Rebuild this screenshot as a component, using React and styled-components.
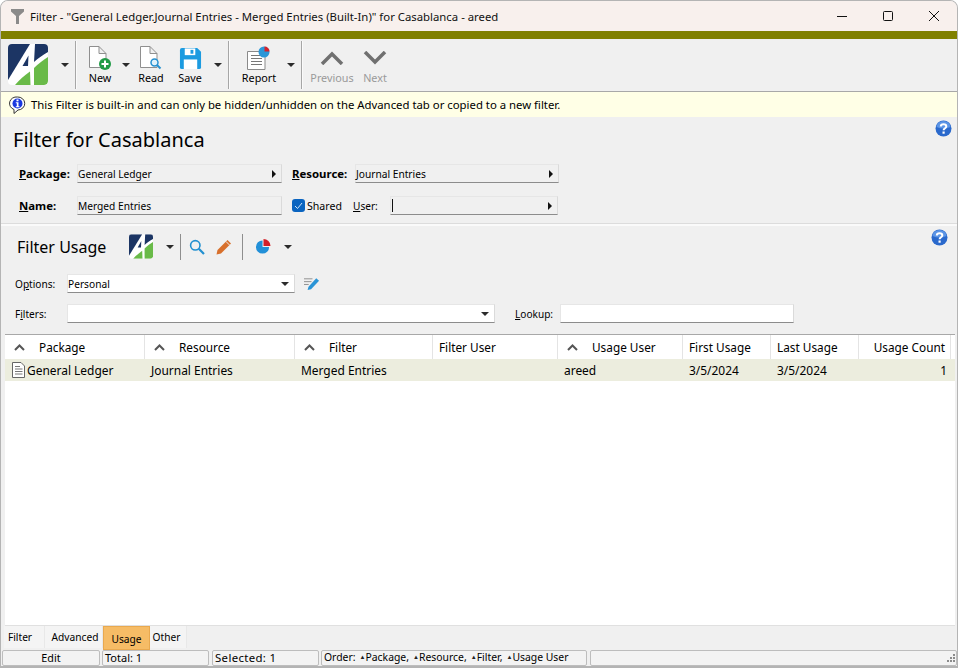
import React from 'react';
import styled, { createGlobalStyle } from 'styled-components';

const GlobalStyle = createGlobalStyle`
  html, body {
    margin: 0;
    padding: 0;
    background: #ffffff;
  }
  * {
    box-sizing: border-box;
  }
`;

const columns = '140px 150px 138px 125px 125px 88px 88px 92px';
const font = '"Noto Sans", "Open Sans", sans-serif';

const Window = styled.div`
  width: 958px;
  height: 668px;
  display: flex;
  flex-direction: column;
  background: #f0f0f0;
  border: 1px solid #b4b4b4;
  border-bottom-width: 2px;
  border-radius: 8px 8px 0 0;
  overflow: hidden;
  font-family: ${font};
  font-size: 11px;
  color: #000;
`;

const TitleBar = styled.div`
  height: 30px;
  flex: none;
  display: flex;
  align-items: center;
  background: #f8f0ed;
  padding-left: 10px;
`;

const TitleText = styled.span`
  font-size: 11.35px;
  margin-left: 6px;
  flex: 1;
  color: #111;
`;

const WindowButton = styled.div`
  width: 46px;
  height: 30px;
  display: flex;
  align-items: center;
  justify-content: center;
`;

const OliveBar = styled.div`
  height: 8px;
  flex: none;
  background: #808000;
`;

const Toolbar = styled.div`
  height: 53px;
  flex: none;
  display: flex;
  align-items: stretch;
  padding-left: 7px;
  border-bottom: 1px solid #a8a8a8;
`;

const ToolButton = styled.div`
  width: ${(p) => p.$w}px;
  margin-left: ${(p) => p.$ml || 0}px;
  display: flex;
  flex-direction: column;
  align-items: center;
  padding-top: 7px;
  color: ${(p) => (p.$off ? '#9a9a9a' : '#000')};
`;

const ToolIcon = styled.div`
  height: 24px;
  display: flex;
  align-items: center;
  justify-content: center;
`;

const ToolLabel = styled.div`
  line-height: 16px;
  font-size: 10.8px;
  white-space: nowrap;
`;

const LogoBox = styled.div`
  width: 40px;
  height: 41px;
  margin-top: 5px;
`;

const DropBox = styled.div`
  width: 8px;
  margin-left: ${(p) => p.$ml}px;
  display: flex;
  align-items: center;
  justify-content: center;
`;

const Caret = styled.div`
  width: 0;
  height: 0;
  border-left: 4px solid transparent;
  border-right: 4px solid transparent;
  border-top: 4px solid #2b2b2b;
`;

const ToolSep = styled.div`
  width: 2px;
  margin: 2px 0 2px ${(p) => p.$ml}px;
  background: #a6a6a6;
  border-right: 1px solid #fafafa;
`;

const InfoBar = styled.div`
  height: 25px;
  flex: none;
  display: flex;
  align-items: center;
  gap: 5px;
  padding-left: 8px;
  background: #ffffe6;
  font-size: 11.35px;
`;

const Section = styled.section`
  height: 107px;
  flex: none;
  position: relative;
  border-bottom: 1px solid #dcdcdc;
  padding: 8px 0 0 12px;
`;

const HelpSpot = styled.div`
  position: absolute;
  top: ${(p) => p.$top}px;
  right: ${(p) => p.$right}px;
  width: 17px;
  height: 17px;
`;

const Heading = styled.h1`
  margin: 0;
  font-size: 20px;
  font-weight: 400;
  line-height: 29px;
`;

const FieldRow = styled.div`
  display: flex;
  align-items: center;
  height: 19px;
  margin-top: ${(p) => p.$mt}px;
  padding-left: ${(p) => p.$pl || 0}px;
`;

const BoldLabel = styled.label`
  font-weight: 700;
  font-size: 11.4px;
  width: ${(p) => p.$w}px;
  margin-left: ${(p) => p.$ml || 0}px;
  flex: none;
`;

const PlainLabel = styled.label`
  width: ${(p) => p.$w}px;
  margin-left: ${(p) => p.$ml || 0}px;
  flex: none;
  font-size: 10.1px;
`;

const Field = styled.div`
  width: ${(p) => p.$w}px;
  height: 19px;
  flex: none;
  display: flex;
  align-items: center;
  justify-content: space-between;
  padding: 0 5px 0 0;
  background: ${(p) => (p.$white ? '#fff' : '#f0f0f0')};
  border: 1px solid #e6e6e6;
  border-bottom: 1px solid #8c8c8c;
  border-right-color: #dadada;
  font-size: 10.2px;
  white-space: nowrap;
`;

const SideCaret = styled.div`
  width: 0;
  height: 0;
  border-top: 4px solid transparent;
  border-bottom: 4px solid transparent;
  border-left: 4px solid #111;
`;

const Cursor = styled.div`
  width: 1px;
  height: 13px;
  margin-left: 1px;
  background: #111;
`;

const Check = styled.div`
  width: 13px;
  height: 13px;
  margin-left: 10px;
  flex: none;
  border-radius: 3px;
  background: #0a64c0;
  display: flex;
  align-items: center;
  justify-content: center;
`;

const CheckText = styled.span`
  margin-left: 2px;
  width: 46px;
  flex: none;
  font-size: 10.6px;
`;

const UsagePanel = styled.section`
  flex: 1;
  min-height: 0;
  display: flex;
  flex-direction: column;
  position: relative;
  border-top: 2px solid #fafafa;
`;

const UsageBar = styled.div`
  height: 37px;
  flex: none;
  display: flex;
  align-items: stretch;
  padding: 4px 0 0 16px;
`;

const UsageTitle = styled.div`
  width: 112px;
  font-size: 16px;
  line-height: 34px;
  flex: none;
`;

const SmallLogo = styled.div`
  width: 24px;
  height: 25px;
  margin-top: 4px;
`;

const BarSep = styled.div`
  width: 1px;
  margin: 4px 0 3px ${(p) => p.$ml}px;
  background: #8e8e8e;
`;

const BarIcon = styled.div`
  width: 16px;
  margin-left: ${(p) => p.$ml}px;
  display: flex;
  align-items: center;
  justify-content: center;
`;

const FilterRow = styled.div`
  display: flex;
  align-items: center;
  height: 19px;
  padding-left: 14px;
  margin-top: ${(p) => p.$mt}px;
`;

const Grid = styled.div`
  flex: 1;
  min-height: 0;
  margin: 11px 2px 0 4px;
  background: #fff;
  border-top: 1px solid #a8a8a8;
  border-bottom: 1px solid #e0e0e0;
`;

const HeadRow = styled.div`
  display: grid;
  grid-template-columns: ${columns};
  height: 24px;
`;

const HeadCell = styled.div`
  display: flex;
  align-items: center;
  justify-content: ${(p) => (p.$right ? 'flex-end' : 'flex-start')};
  padding: ${(p) => (p.$right ? '0 5px 0 0' : '0 0 0 6px')};
  border-right: 1px solid #e4e4e4;
  font-size: 11.8px;
  white-space: nowrap;
`;

const SortMark = styled.svg`
  width: 11px;
  height: 7px;
  margin: 0 14px 0 3px;
  flex: none;
`;

const DataRow = styled.div`
  display: grid;
  grid-template-columns: ${columns};
  height: 22px;
  background: #ecedde;
`;

const DataCell = styled.div`
  display: flex;
  align-items: center;
  gap: 2px;
  justify-content: ${(p) => (p.$right ? 'flex-end' : 'flex-start')};
  padding: ${(p) => (p.$right ? '0 4px 0 0' : `0 0 0 ${p.$pl ?? 6}px`)};
  font-size: 11.95px;
  white-space: nowrap;
`;

const Tabs = styled.div`
  height: 24px;
  flex: none;
  display: flex;
  padding-left: 3px;
`;

const Tab = styled.div`
  width: ${(p) => p.$w}px;
  height: ${(p) => (p.$active ? 24 : 22)}px;
  display: flex;
  align-items: ${(p) => (p.$active ? 'flex-end' : 'center')};
  justify-content: center;
  padding-bottom: ${(p) => (p.$active ? 3 : 0)}px;
  padding-right: ${(p) => p.$pr || 0}px;
  padding-left: ${(p) => p.$pl || 0}px;
  background: ${(p) => (p.$active ? '#f6bc66' : '#f4f4f4')};
  border: ${(p) => (p.$active ? '1px solid #e9a94f' : 'none')};
  border-right: ${(p) => (p.$active ? '1px solid #e9a94f' : '1px solid #e8e8e8')};
  font-size: 10.2px;
`;

const StatusBar = styled.div`
  height: 16px;
  flex: none;
  display: flex;
  gap: 2px;
  padding-left: 1px;
  position: relative;
`;

const StatusCell = styled.div`
  width: ${(p) => p.$w}px;
  flex: ${(p) => (p.$grow ? 1 : 'none')};
  margin-right: ${(p) => p.$mr || 0}px;
  display: flex;
  align-items: center;
  justify-content: ${(p) => (p.$center ? 'center' : 'flex-start')};
  padding-left: ${(p) => (p.$center ? 0 : 2)}px;
  padding-bottom: 2px;
  background: #f3f3f3;
  border: 1px solid #bdbdbd;
  border-radius: 2px;
  font-size: ${(p) => p.$size || 10.8}px;
  letter-spacing: ${(p) => p.$track || 0}px;
  white-space: nowrap;
`;

const OrderMark = styled.span`
  font-size: 6px;
  margin-left: 4px;
  color: #222;
`;

const Grip = styled.svg`
  position: absolute;
  right: 1px;
  bottom: 1px;
  width: 12px;
  height: 12px;
`;

const LogoMark = () => (
  <svg width="100%" height="100%" viewBox="0 0 40 41">
    <defs>
      <clipPath id="logoClip">
        <rect width="40" height="41" rx="4" />
      </clipPath>
    </defs>
    <g clipPath="url(#logoClip)">
      <rect width="40" height="41" fill="#fff" />
      <path d="M0 0H22L0 36Z" fill="#1c3564" />
      <path d="M27 0H40V8C35 11 30 14 26 18Z" fill="#1c3564" />
      <path d="M14.500 22L20.500 11.500L20 22Z" fill="#1c3564" />
      <path d="M40 13V37a4 4 0 0 1-4 4H26V24C30 20 35 16 40 13Z" fill="#69ba48" />
      <path d="M7 41C11 36 16 32 22 27.500L22.500 41Z" fill="#69ba48" />
    </g>
  </svg>
);

const DocShape = () => (
  <path
    d="M1.500 0.500H11L18 7.500V21.500H1.500Z M11 0.500V7.500H18"
    fill="#fff"
    stroke="#8f8f8f"
  />
);

const NewIcon = () => (
  <svg width="24" height="24" viewBox="0 0 24 24">
    <DocShape />
    <circle cx="17" cy="18" r="6" fill="#1f9a46" />
    <path d="M17 14.500V21.500M13.500 18H20.500" stroke="#fff" strokeWidth="2" />
  </svg>
);

const ReadIcon = () => (
  <svg width="24" height="24" viewBox="0 0 24 24">
    <DocShape />
    <circle cx="15.500" cy="16.500" r="3.500" fill="#dff1fb" stroke="#2590d0" strokeWidth="1.500" />
    <path d="M18 19L21.500 22.500" stroke="#2590d0" strokeWidth="2" />
  </svg>
);

const SaveIcon = () => (
  <svg width="23" height="23" viewBox="0 0 24 24">
    <path d="M3 1H19L23 5V21a2 2 0 0 1-2 2H3a2 2 0 0 1-2-2V3a2 2 0 0 1 2-2Z" fill="#1c9be0" />
    <rect x="6" y="1.500" width="11" height="7" fill="#fff" />
    <rect x="12" y="3" width="3" height="4" fill="#1c9be0" />
    <rect x="5" y="13" width="14" height="10" fill="#fff" />
  </svg>
);

const ReportIcon = () => (
  <svg width="26" height="24" viewBox="0 0 26 24">
    <path d="M1.500 5.500H15L19 9.500V23.500H1.500Z" fill="#fff" stroke="#8a8a8a" />
    <path d="M5 9.500H14M5 12.500H16M5 15.500H16M5 18.500H16" stroke="#777" />
    <circle cx="18" cy="6" r="5.500" fill="#2b97d8" />
    <path d="M18.500 5.500V0.500A5 5 0 0 1 23.500 5.500Z" fill="#d4232b" />
  </svg>
);

const ChevronIcon = ({ up }) => (
  <svg width="24" height="14" viewBox="0 0 24 14">
    <path
      d={up ? 'M2 13L12 3L22 13' : 'M2 1L12 11L22 1'}
      fill="none"
      stroke="#707070"
      strokeWidth="3.500"
    />
  </svg>
);

const InfoIcon = () => (
  <svg width="17" height="18" viewBox="0 0 17 18">
    <path d="M8.500 1A7 6.500 0 0 1 9 14L5 17.500V13.500A7 6.500 0 0 1 8.500 1Z" fill="#fff" stroke="#333" />
    <circle cx="8.500" cy="7.500" r="5" fill="#1a38e0" />
    <rect x="7.500" y="3.500" width="2" height="1.800" fill="#fff" />
    <path d="M6.800 6.300H9.500V10.200H10.500V11.200H6.800V10.200H7.800V7.300H6.800Z" fill="#fff" />
  </svg>
);

const HelpIcon = () => (
  <svg width="17" height="17" viewBox="0 0 17 17">
    <circle cx="8.500" cy="8.500" r="8" fill="#2a69cc" />
    <path d="M1.500 7A7 6 0 0 1 15.500 7Q8.500 10 1.500 7Z" fill="#5c95e6" />
    <path
      d="M5.800 6.500C5.800 3.500 11.300 3.500 11.300 6.500C11.300 8.300 8.600 8.300 8.600 10.300"
      fill="none"
      stroke="#fff"
      strokeWidth="2"
    />
    <rect x="7.500" y="11.500" width="2.200" height="2.200" fill="#fff" />
  </svg>
);

const SearchIcon = () => (
  <svg width="16" height="16" viewBox="0 0 16 16">
    <circle cx="6.300" cy="6.300" r="4.700" fill="none" stroke="#2290d0" strokeWidth="1.600" />
    <path d="M9.800 9.800L15 15" stroke="#2290d0" strokeWidth="2.200" />
  </svg>
);

const PencilIcon = () => (
  <svg width="16" height="16" viewBox="0 0 16 16">
    <path d="M11.500 1L15 4.500L5 14.500L0.500 15.500L1.500 11Z" fill="#d8702c" />
    <path d="M10 2.500L13.500 6" stroke="#f0f0f0" />
  </svg>
);

const PieIcon = () => (
  <svg width="17" height="17" viewBox="0 0 17 17">
    <path d="M8 2A7 7 0 1 0 15 9H8Z" fill="#2290d8" />
    <path d="M9 0.500A7.500 7.500 0 0 1 16.500 8H9Z" fill="#d42028" />
  </svg>
);

const NoteEditIcon = () => (
  <svg width="17" height="14" viewBox="0 0 17 14">
    <path d="M0 1.500H9M0 4.500H8M0 7.500H5" stroke="#8c8c8c" />
    <path d="M13 1L16 3.500L7.500 12.500L3.800 13.500L4.800 9.800Z" fill="#2a94d6" />
  </svg>
);

const RowDocIcon = () => (
  <svg width="13" height="16" viewBox="0 0 13 16">
    <path d="M0.500 0.500H9L12.500 4V15.500H0.500Z" fill="#fff" stroke="#666" />
    <path d="M3 4.500H8M3 7H10.500M3 9.500H10.500M3 12H10.500" stroke="#777" />
  </svg>
);

const FilterIcon = () => (
  <svg width="13" height="15" viewBox="0 0 13 15">
    <path d="M0 0H13V2.500L8 7V15H5V7L0 2.500Z" fill="#8a8a8a" />
  </svg>
);

const ArrowUp = () => (
  <SortMark viewBox="0 0 11 7">
    <path d="M1 6L5.500 1.500L10 6" fill="none" stroke="#555" strokeWidth="2" />
  </SortMark>
);

const HEADERS = [
  { text: 'Package', sort: true },
  { text: 'Resource', sort: true },
  { text: 'Filter', sort: true },
  { text: 'Filter User' },
  { text: 'Usage User', sort: true },
  { text: 'First Usage' },
  { text: 'Last Usage' },
  { text: 'Usage Count', right: true },
];

const App = () => {
  return (
    <>
      <GlobalStyle />
      <Window>
        <TitleBar>
          <FilterIcon />
          <TitleText>
            Filter - &quot;General Ledger.Journal Entries - Merged Entries (Built-In)&quot; for
            Casablanca - areed
          </TitleText>
          <WindowButton>
            <svg width="10" height="10" viewBox="0 0 10 10">
              <path d="M0 5.500H10" stroke="#111" />
            </svg>
          </WindowButton>
          <WindowButton>
            <svg width="10" height="10" viewBox="0 0 10 10">
              <rect x="0.500" y="0.500" width="9" height="9" rx="1" fill="none" stroke="#111" />
            </svg>
          </WindowButton>
          <WindowButton>
            <svg width="10" height="10" viewBox="0 0 10 10">
              <path d="M0 0L10 10M10 0L0 10" stroke="#111" />
            </svg>
          </WindowButton>
        </TitleBar>
        <OliveBar />

        <Toolbar>
          <LogoBox>
            <LogoMark />
          </LogoBox>
          <DropBox $ml={13}>
            <Caret />
          </DropBox>
          <ToolSep $ml={6} />
          <ToolButton $w={28} $ml={9}>
            <ToolIcon>
              <NewIcon />
            </ToolIcon>
            <ToolLabel>New</ToolLabel>
          </ToolButton>
          <DropBox $ml={8}>
            <Caret />
          </DropBox>
          <ToolButton $w={30} $ml={6}>
            <ToolIcon>
              <ReadIcon />
            </ToolIcon>
            <ToolLabel>Read</ToolLabel>
          </ToolButton>
          <ToolButton $w={30} $ml={9}>
            <ToolIcon>
              <SaveIcon />
            </ToolIcon>
            <ToolLabel>Save</ToolLabel>
          </ToolButton>
          <DropBox $ml={9}>
            <Caret />
          </DropBox>
          <ToolSep $ml={6} />
          <ToolButton $w={40} $ml={9}>
            <ToolIcon>
              <ReportIcon />
            </ToolIcon>
            <ToolLabel>Report</ToolLabel>
          </ToolButton>
          <DropBox $ml={8}>
            <Caret />
          </DropBox>
          <ToolSep $ml={6} />
          <ToolButton $w={46} $ml={6} $off>
            <ToolIcon>
              <ChevronIcon up />
            </ToolIcon>
            <ToolLabel>Previous</ToolLabel>
          </ToolButton>
          <ToolButton $w={30} $ml={5} $off>
            <ToolIcon>
              <ChevronIcon />
            </ToolIcon>
            <ToolLabel>Next</ToolLabel>
          </ToolButton>
        </Toolbar>

        <InfoBar>
          <InfoIcon />
          This Filter is built-in and can only be hidden/unhidden on the Advanced tab or copied to
          a new filter.
        </InfoBar>

        <Section>
          <Heading>Filter for Casablanca</Heading>
          <HelpSpot $top={3} $right={5}>
            <HelpIcon />
          </HelpSpot>
          <FieldRow $mt={10} $pl={6}>
            <BoldLabel $w={58}>
              <u>P</u>ackage:
            </BoldLabel>
            <Field $w={205}>
              General Ledger
              <SideCaret />
            </Field>
            <BoldLabel $w={63} $ml={10}>
              <u>R</u>esource:
            </BoldLabel>
            <Field $w={204}>
              Journal Entries
              <SideCaret />
            </Field>
          </FieldRow>
          <FieldRow $mt={13} $pl={6}>
            <BoldLabel $w={58}>
              <u>N</u>ame:
            </BoldLabel>
            <Field $w={205}>Merged Entries</Field>
            <Check>
              <svg width="9" height="8" viewBox="0 0 9 8">
                <path d="M1 4L3.500 6.500L8 1" fill="none" stroke="#cfe3f7" />
              </svg>
            </Check>
            <CheckText>Shared</CheckText>
            <PlainLabel $w={37}>
              <u>U</u>ser:
            </PlainLabel>
            <Field $w={168}>
              <Cursor />
              <SideCaret />
            </Field>
          </FieldRow>
        </Section>

        <UsagePanel>
          <HelpSpot $top={3} $right={9}>
            <HelpIcon />
          </HelpSpot>
          <UsageBar>
            <UsageTitle>Filter Usage</UsageTitle>
            <SmallLogo>
              <LogoMark />
            </SmallLogo>
            <DropBox $ml={13}>
              <Caret />
            </DropBox>
            <BarSep $ml={6} />
            <BarIcon $ml={8}>
              <SearchIcon />
            </BarIcon>
            <BarIcon $ml={11}>
              <PencilIcon />
            </BarIcon>
            <BarSep $ml={10} />
            <BarIcon $ml={12}>
              <PieIcon />
            </BarIcon>
            <DropBox $ml={13}>
              <Caret />
            </DropBox>
          </UsageBar>

          <FilterRow $mt={11}>
            <PlainLabel $w={52}>
              O<u>p</u>tions:
            </PlainLabel>
            <Field $w={228} $white>
              Personal
              <Caret />
            </Field>
            <BarIcon $ml={9}>
              <NoteEditIcon />
            </BarIcon>
          </FilterRow>
          <FilterRow $mt={11}>
            <PlainLabel $w={52}>
              F<u>i</u>lters:
            </PlainLabel>
            <Field $w={428} $white>
              <span />
              <Caret />
            </Field>
            <PlainLabel $w={45} $ml={20}>
              <u>L</u>ookup:
            </PlainLabel>
            <Field $w={234} $white />
          </FilterRow>

          <Grid>
            <HeadRow>
              {HEADERS.map((h) => (
                <HeadCell key={h.text} $right={h.right}>
                  {h.sort && <ArrowUp />}
                  {h.text}
                </HeadCell>
              ))}
            </HeadRow>
            <DataRow>
              <DataCell $pl={7}>
                <RowDocIcon />
                General Ledger
              </DataCell>
              <DataCell>Journal Entries</DataCell>
              <DataCell>Merged Entries</DataCell>
              <DataCell />
              <DataCell>areed</DataCell>
              <DataCell>3/5/2024</DataCell>
              <DataCell>3/5/2024</DataCell>
              <DataCell $right>1</DataCell>
            </DataRow>
          </Grid>

          <Tabs>
            <Tab $w={41} $pr={8}>
              Filter
            </Tab>
            <Tab $w={58} $pl={3}>
              Advanced
            </Tab>
            <Tab $w={47} $active>
              Usage
            </Tab>
            <Tab $w={37} $pr={3}>
              Other
            </Tab>
          </Tabs>
          <StatusBar>
            <StatusCell $w={98} $center>
              Edit
            </StatusCell>
            <StatusCell $w={107} $mr={1} $size={11}>
              Total: 1
            </StatusCell>
            <StatusCell $w={107} $size={11.4} $track={0.35}>
              Selected: 1
            </StatusCell>
            <StatusCell $w={266} $mr={1} $size={10.4}>
              Order:
              <OrderMark>▲</OrderMark>Package,
              <OrderMark>▲</OrderMark>Resource,
              <OrderMark>▲</OrderMark>Filter,
              <OrderMark>▲</OrderMark>Usage User
            </StatusCell>
            <StatusCell $grow />
            <Grip viewBox="0 0 12 12">
              <path
                d="M9 1h2v2H9zM6 4h2v2H6zM9 4h2v2H9zM3 7h2v2H3zM6 7h2v2H6zM9 7h2v2H9z"
                fill="#8c8c8c"
              />
            </Grip>
          </StatusBar>
        </UsagePanel>
      </Window>
    </>
  );
};

export default App;
